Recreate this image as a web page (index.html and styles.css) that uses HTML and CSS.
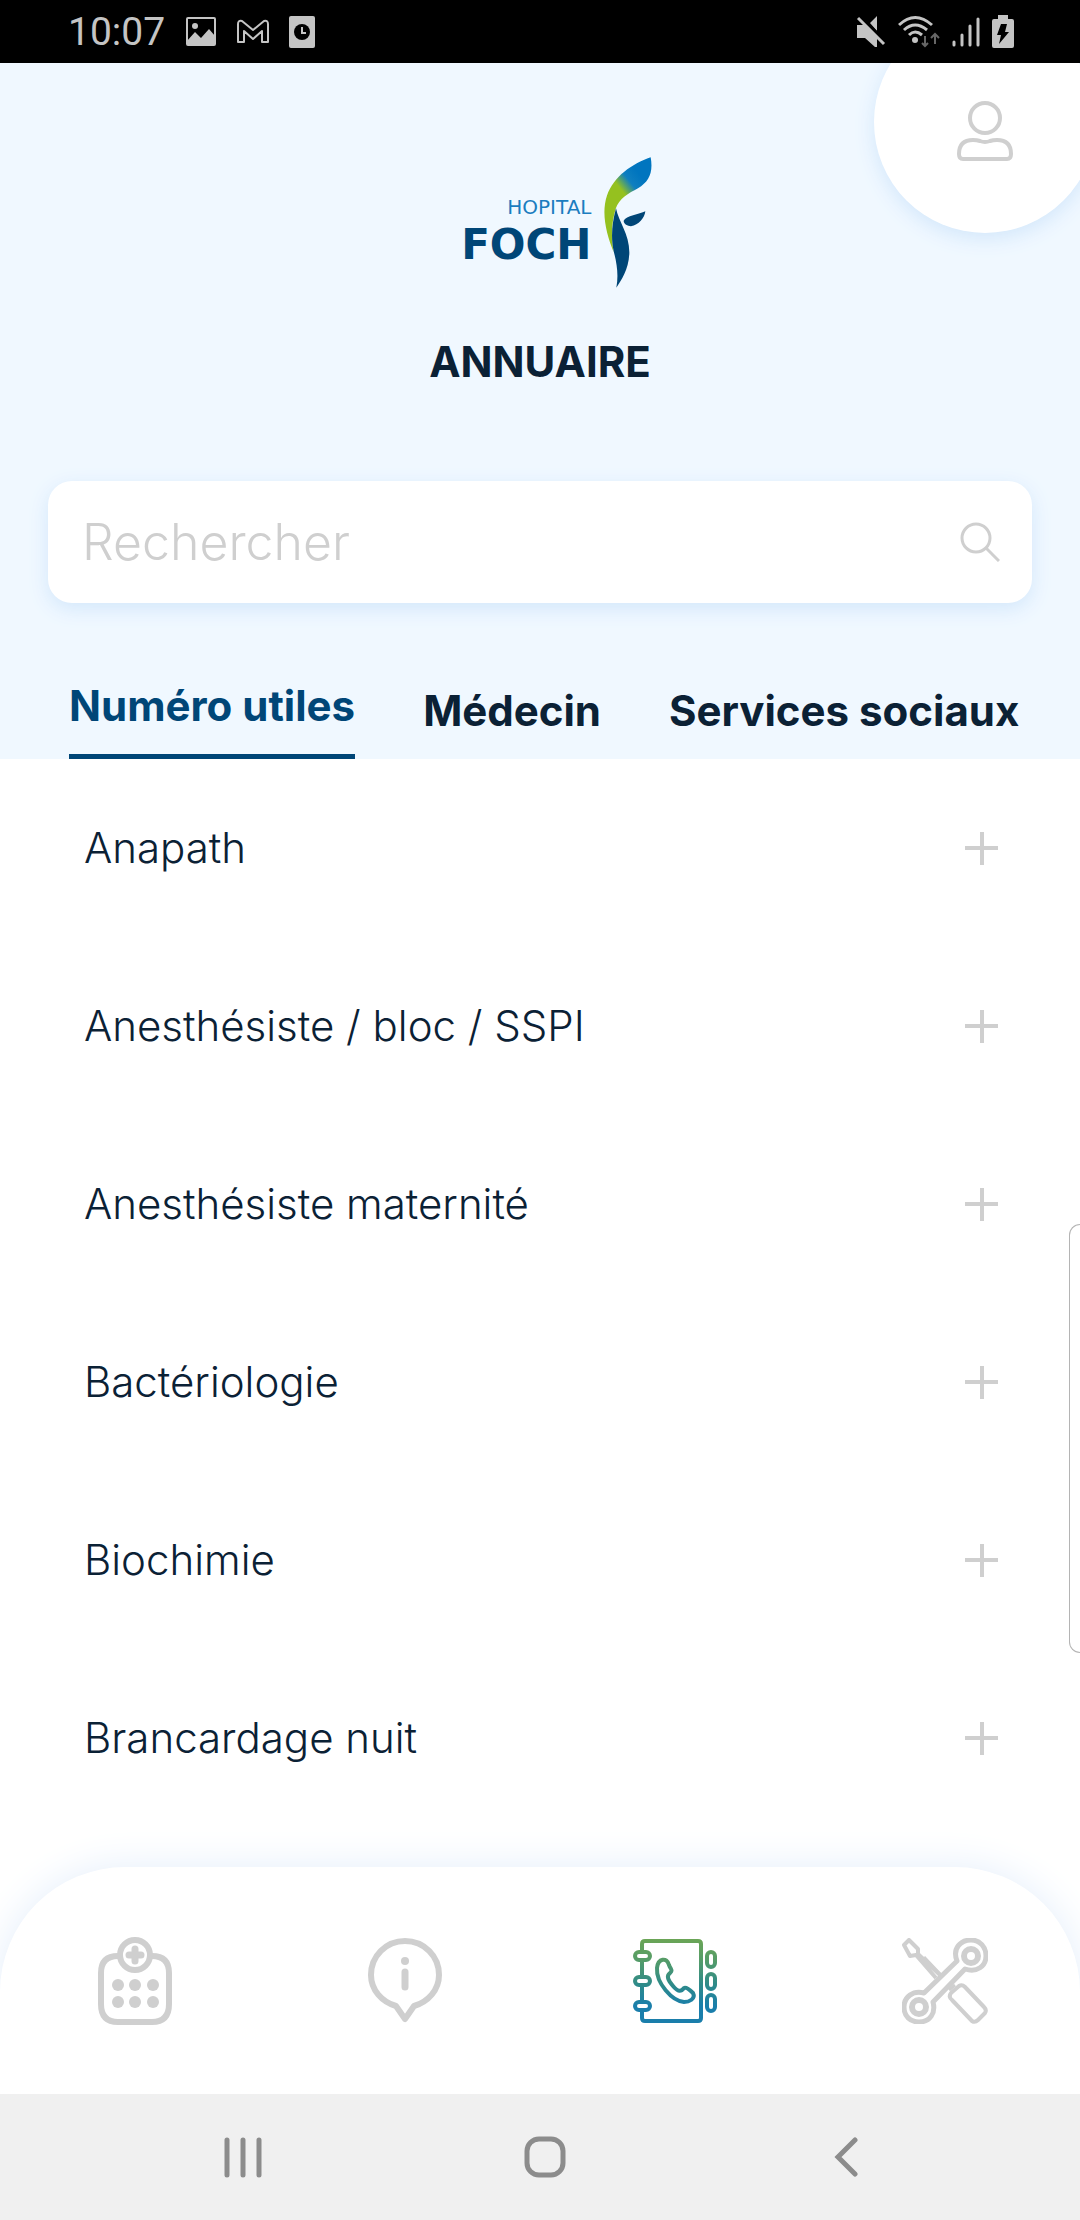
FILE: index.html
```html
<!DOCTYPE html>
<html lang="fr">
<head>
    <meta charset="UTF-8">
    <meta name="viewport" content="width=device-width, initial-scale=1.0">
    <title>Hopital Foch - Annuaire</title>
    <link rel="stylesheet" href="styles.css">
</head>
<body>
    <!-- Status bar -->
    <div class="status-bar">
        <div class="status-left">
            <span class="time">10:07</span>
            <svg width="32" height="32" viewBox="0 0 32 32">
                <rect x="2" y="2" width="28" height="27" rx="1" fill="none" stroke="#c4c4c4" stroke-width="2"/>
                <circle cx="10" cy="10" r="3" fill="#c4c4c4"/>
                <path d="M2 25l8-9 6 6 8-9 6 7v9H2z" fill="#c4c4c4"/>
            </svg>
            <svg width="32" height="32" viewBox="0 0 32 32" fill="none" stroke="#c4c4c4" stroke-width="2" stroke-linejoin="round">
                <path d="M1 26V8q0-4 4-3l11 9 11-9q4-1 4 3v18h-6V15l-9 8-9-8v11z"/>
            </svg>
            <svg width="26" height="32" viewBox="0 0 26 32">
                <rect width="26" height="32" rx="2" fill="#c4c4c4"/>
                <circle cx="13" cy="16" r="8" fill="#000"/>
                <path d="M13 11v6h4" fill="none" stroke="#c4c4c4" stroke-width="2"/>
            </svg>
        </div>
        <div class="status-right">
            <svg width="30" height="32" viewBox="0 0 30 32" fill="#c4c4c4">
                <path d="M1 9h7l13 12v10h-2L9 22H1zM14 7l7-7v15z"/>
                <path d="M4 0l26 26" stroke="#000" stroke-width="3"/>
                <path d="M2 2l26 26" stroke="#c4c4c4" stroke-width="3"/>
            </svg>
            <svg width="42" height="34" viewBox="0 0 42 34" fill="none" stroke="#c4c4c4" stroke-width="3">
                <path d="M1 10q16-15 33 0M6 15q11-10 23 0M11 20q6-6 13 0"/>
                <circle cx="17" cy="25" r="3" fill="#c4c4c4" stroke="none"/>
                <path d="M27 21v10M24 28l3 3 3-3M37 29V19M33 23l4-4 4 4" stroke="#666" stroke-width="2"/>
            </svg>
            <svg width="28" height="32" viewBox="0 0 28 32" stroke="#c4c4c4" stroke-width="3" stroke-linecap="round">
                <path d="M2 26v3M10 19v10M18 10v19M26 3v26"/>
            </svg>
            <svg width="22" height="34" viewBox="0 0 22 34">
                <path d="M6 0h10v4h4q2 0 2 2v25q0 2-2 2H2q-2 0-2-2V6q0-2 2-2h4z" fill="#c4c4c4"/>
                <path d="M9 9h6l-2 8h4L7 29l2-9H5z" fill="#000"/>
            </svg>
        </div>
    </div>

    <header class="header">
        <button class="profile-button" aria-label="Profil">
            <svg width="56" height="60" viewBox="0 0 56 60" fill="none" stroke="#cfcfcf" stroke-width="4">
                <circle cx="28" cy="17" r="15"/>
                <path d="M6 58q-4 0-4-5 0-14 14-14 4 0 7 1 5 2 10 0 3-1 7-1 14 0 14 14 0 5-4 5z"/>
            </svg>
        </button>

        <div class="logo">
            <div class="logo-text">
                <span class="logo-small">HOPITAL</span>
                <span class="logo-big">FOCH</span>
            </div>
            <svg width="48" height="131" viewBox="616 80 144 392">
                <defs>
                    <linearGradient id="leaf" x1="655" y1="190" x2="725" y2="135" gradientUnits="userSpaceOnUse">
                        <stop offset="0.2" stop-color="#95c11f"/>
                        <stop offset="0.6" stop-color="#0f7fc0"/>
                        <stop offset="1" stop-color="#0075bf"/>
                    </linearGradient>
                </defs>
                <path d="M756 80C700 100 645 137 625 195C607 248 623 310 645 365C637 320 638 280 651 235C661 203 690 188 718 173C752 153 764 125 756 80z" fill="url(#leaf)"/>
                <path d="M652 233C660 275 693 310 692 368C690 418 668 448 653 472C660 435 655 400 645 362C636 320 640 278 652 233z" fill="#004677"/>
                <path d="M740 242C722 251 682 255 675 271C675 281 687 287 697 287C720 283 738 262 740 242z" fill="#004677"/>
            </svg>
        </div>

        <h1>ANNUAIRE</h1>

        <form class="search" role="search">
            <input type="search" placeholder="Rechercher" aria-label="Rechercher">
            <button type="button" aria-label="Lancer la recherche">
                <svg width="40" height="40" viewBox="0 0 40 40" fill="none" stroke="#cfcfcf" stroke-width="3">
                    <circle cx="16" cy="16" r="14"/>
                    <path d="M26 26l13 13"/>
                </svg>
            </button>
        </form>

        <div class="tabs" role="tablist">
            <button class="tab active" role="tab" aria-selected="true">Numéro utiles</button>
            <button class="tab" role="tab" aria-selected="false">Médecin</button>
            <button class="tab" role="tab" aria-selected="false">Services sociaux</button>
        </div>
    </header>

    <main class="directory">
        <button class="entry">Anapath <span class="plus"></span></button>
        <button class="entry">Anesthésiste / bloc / SSPI <span class="plus"></span></button>
        <button class="entry">Anesthésiste maternité <span class="plus"></span></button>
        <button class="entry">Bactériologie <span class="plus"></span></button>
        <button class="entry">Biochimie <span class="plus"></span></button>
        <button class="entry">Brancardage nuit <span class="plus"></span></button>
    </main>

    <!-- App navigation -->
    <nav class="bottom-nav">
        <a href="#" aria-label="Agenda">
            <svg width="74" height="88" viewBox="0 0 74 88" fill="none" stroke="#cfcfcf" stroke-width="6">
                <path d="M20 19q-17 0-17 17v31q0 18 17 18h34q17 0 17-18V36q0-17-17-17"/>
                <circle cx="37" cy="18" r="15"/>
                <path d="M37 12v12M31 18h12" stroke-width="7" stroke-linecap="round"/>
                <g fill="#cfcfcf" stroke="none">
                    <circle cx="20" cy="48" r="6"/><circle cx="37" cy="48" r="6"/><circle cx="55" cy="48" r="6"/>
                    <circle cx="20" cy="65" r="6"/><circle cx="37" cy="65" r="6"/><circle cx="55" cy="65" r="6"/>
                </g>
            </svg>
        </a>
        <a href="#" aria-label="Informations">
            <svg width="74" height="88" viewBox="0 0 74 88" fill="none" stroke="#cfcfcf" stroke-width="6" stroke-linejoin="round" stroke-linecap="round">
                <path d="M28 69C14 65 3 53 3 38C3 19 18 4 37 4S71 19 71 38C71 53 60 65 46 69L37 82z"/>
                <path d="M37 35v15" stroke-width="7"/>
                <circle cx="37" cy="24" r="4" fill="#cfcfcf" stroke="none"/>
            </svg>
        </a>
        <a href="#" aria-label="Annuaire" aria-current="page">
            <svg width="84" height="84" viewBox="0 0 84 84" fill="none" stroke="url(#book)" stroke-width="4" stroke-linejoin="round">
                <defs>
                    <linearGradient id="book" x1="0" y1="0" x2="0" y2="84" gradientUnits="userSpaceOnUse">
                        <stop offset="0" stop-color="#6ba556"/>
                        <stop offset="0.25" stop-color="#559c68"/>
                        <stop offset="0.55" stop-color="#2d8a8a"/>
                        <stop offset="0.8" stop-color="#1a7eab"/>
                        <stop offset="1" stop-color="#1a7eab"/>
                    </linearGradient>
                </defs>
                <path d="M9 12V5q0-3 3-3h53q3 0 3 3v74q0 3-3 3H12q-3 0-3-3v-7M9 22v15M9 47v16"/>
                <rect x="2" y="13" width="15" height="8" rx="4"/>
                <rect x="2" y="38" width="15" height="8" rx="4"/>
                <rect x="2" y="63" width="15" height="8" rx="4"/>
                <rect x="74" y="13" width="8" height="15" rx="4"/>
                <rect x="74" y="35" width="8" height="15" rx="4"/>
                <rect x="74" y="56" width="8" height="16" rx="4"/>
                <path d="M24 29C25 19 34 18 36 26C38 31 40 31 37 34C33 37 35 41 40 47C45 53 48 53 51 49C53 48 56 50 60 54C63 60 56 63 51 63C39 62 23 44 24 29z"/>
            </svg>
        </a>
        <a href="#" aria-label="Outils">
            <svg width="86" height="86" viewBox="0 0 86 86" fill="none" stroke="#cfcfcf" stroke-width="5" stroke-linejoin="round">
                <path d="M22 55L55 23C50 10 59 2 69 2C78 2 84 9 84 18C84 28 75 35 63 31L31 64C34 75 28 84 17 84C8 84 2 78 2 69C2 59 11 52 22 55z"/>
                <circle cx="69" cy="18" r="7" stroke-width="6"/>
                <circle cx="17" cy="69" r="7" stroke-width="6"/>
                <path d="M38 37L16 16V11L7 2L2 7L8 18L14 17L34 40" stroke-width="4"/>
                <path d="M22 19l17 18M47 52l6-5" stroke-width="3"/>
                <path d="M49 55Q46 59 50 62L70 83Q73 85 76 82L83 75Q85 72 82 69L63 49Q60 46 57 48z" stroke-width="4"/>
            </svg>
        </a>
    </nav>

    <!-- System navigation -->
    <div class="system-nav">
        <button aria-label="Applications récentes">
            <svg width="38" height="42" viewBox="0 0 38 42" stroke="#8c8c8c" stroke-width="5" stroke-linecap="round">
                <path d="M3 4v35M19 4v35M35 4v35"/>
            </svg>
        </button>
        <button aria-label="Accueil">
            <svg width="42" height="42" viewBox="0 0 42 42" fill="none" stroke="#8c8c8c" stroke-width="5">
                <rect x="3" y="3" width="36" height="36" rx="12"/>
            </svg>
        </button>
        <button aria-label="Retour">
            <svg width="24" height="42" viewBox="0 0 24 42" fill="none" stroke="#8c8c8c" stroke-width="5" stroke-linecap="round">
                <path d="M21 4L4 21l17 17"/>
            </svg>
        </button>
    </div>

    <div class="edge-handle"></div>
</body>
</html>
```
FILE: styles.css
```css
* {
    box-sizing: border-box;
}

body {
    font-family: Inter, sans-serif;
    margin: 0;
    min-height: 100vh;
    display: flex;
    flex-direction: column;
    position: relative;
    overflow-x: hidden;
    background-color: #fff;
    color: #0b2135;
}

button {
    font-family: inherit;
    color: inherit;
    background: none;
    border: none;
    padding: 0;
    cursor: pointer;
}

svg {
    display: block;
}

/* Status bar */
.status-bar {
    display: flex;
    justify-content: space-between;
    align-items: center;
    height: 63px;
    padding: 0 66px 0 68px;
    background-color: #000;
    color: #c4c4c4;
}

.status-left {
    display: flex;
    align-items: center;
    gap: 20px;
}

.status-right {
    display: flex;
    align-items: center;
    gap: 12px;
}

.time {
    font-family: Roboto, sans-serif;
    font-size: 39px;
    line-height: 48px;
}

/* Header */
.header {
    position: relative;
    overflow: hidden;
    display: flex;
    flex-direction: column;
    align-items: center;
    padding-top: 94px;
    background-color: #f0f8ff;
}

.profile-button {
    position: absolute;
    top: -52px;
    right: -16px;
    width: 222px;
    height: 222px;
    display: flex;
    align-items: center;
    justify-content: center;
    padding-top: 18px;
    border-radius: 50%;
    background-color: #fff;
    box-shadow: 0 6px 20px #d3e7fb;
}

.logo {
    display: flex;
    gap: 12px;
}

.logo-text {
    display: flex;
    flex-direction: column;
    align-items: flex-end;
    width: 163px;
    padding-top: 38px;
    font-family: "DejaVu Sans", sans-serif;
}

.logo-small {
    font-size: 20px;
    line-height: 24px;
    color: #1b7dc0;
}

.logo-big {
    font-size: 42px;
    font-weight: bold;
    line-height: 52px;
    color: #004677;
}

h1 {
    margin: 50px 0 0;
    font-size: 42px;
    font-weight: 700;
    line-height: 48px;
}

.search {
    display: flex;
    align-items: center;
    align-self: stretch;
    height: 122px;
    margin: 95px 48px 0;
    padding: 0 32px;
    border-radius: 24px;
    background-color: #fff;
    box-shadow: 0 6px 20px #d3e7fb;
}

.search input {
    flex: 1;
    min-width: 0;
    border: none;
    outline: none;
    background: none;
    font-family: inherit;
    font-size: 50px;
    font-weight: 300;
    color: inherit;
}

.search input::placeholder {
    color: #cfcfcf;
}

.tabs {
    display: flex;
    align-self: stretch;
    gap: 68px;
    height: 96px;
    margin-top: 60px;
    padding-left: 69px;
    white-space: nowrap;
}

.tab {
    font-size: 42px;
    font-weight: 700;
    line-height: 48px;
}

.tab.active {
    padding-bottom: 5px;
    border-bottom: 5px solid #004677;
    color: #004677;
}

/* Directory */
.directory {
    flex: 1;
    display: flex;
    flex-direction: column;
}

.entry {
    display: flex;
    justify-content: space-between;
    align-items: center;
    height: 178px;
    padding: 0 82px 0 84px;
    font-size: 42px;
    font-weight: 300;
    line-height: 48px;
    text-align: left;
}

.plus {
    width: 33px;
    height: 33px;
    background:
        linear-gradient(#cfcfcf, #cfcfcf) center / 33px 4px no-repeat,
        linear-gradient(#cfcfcf, #cfcfcf) center / 4px 33px no-repeat;
}

/* App navigation */
.bottom-nav {
    display: flex;
    align-items: center;
    height: 227px;
    border-radius: 125px 125px 0 0;
    background-color: #fff;
    box-shadow: 0 0 40px #e4eefb;
    clip-path: inset(-60px 0 0 0);
}

.bottom-nav a {
    flex: 1;
    display: flex;
    justify-content: center;
}

/* System navigation */
.system-nav {
    display: flex;
    height: 126px;
    padding: 0 83px 0 92px;
    background-color: #f0f0f0;
}

.system-nav button {
    flex: 1;
    display: flex;
    align-items: center;
    justify-content: center;
}

.edge-handle {
    position: absolute;
    top: 1224px;
    right: 0;
    width: 11px;
    height: 429px;
    border: 1px solid #b4b4b4;
    border-right: none;
    border-radius: 16px 0 0 16px;
}
```
